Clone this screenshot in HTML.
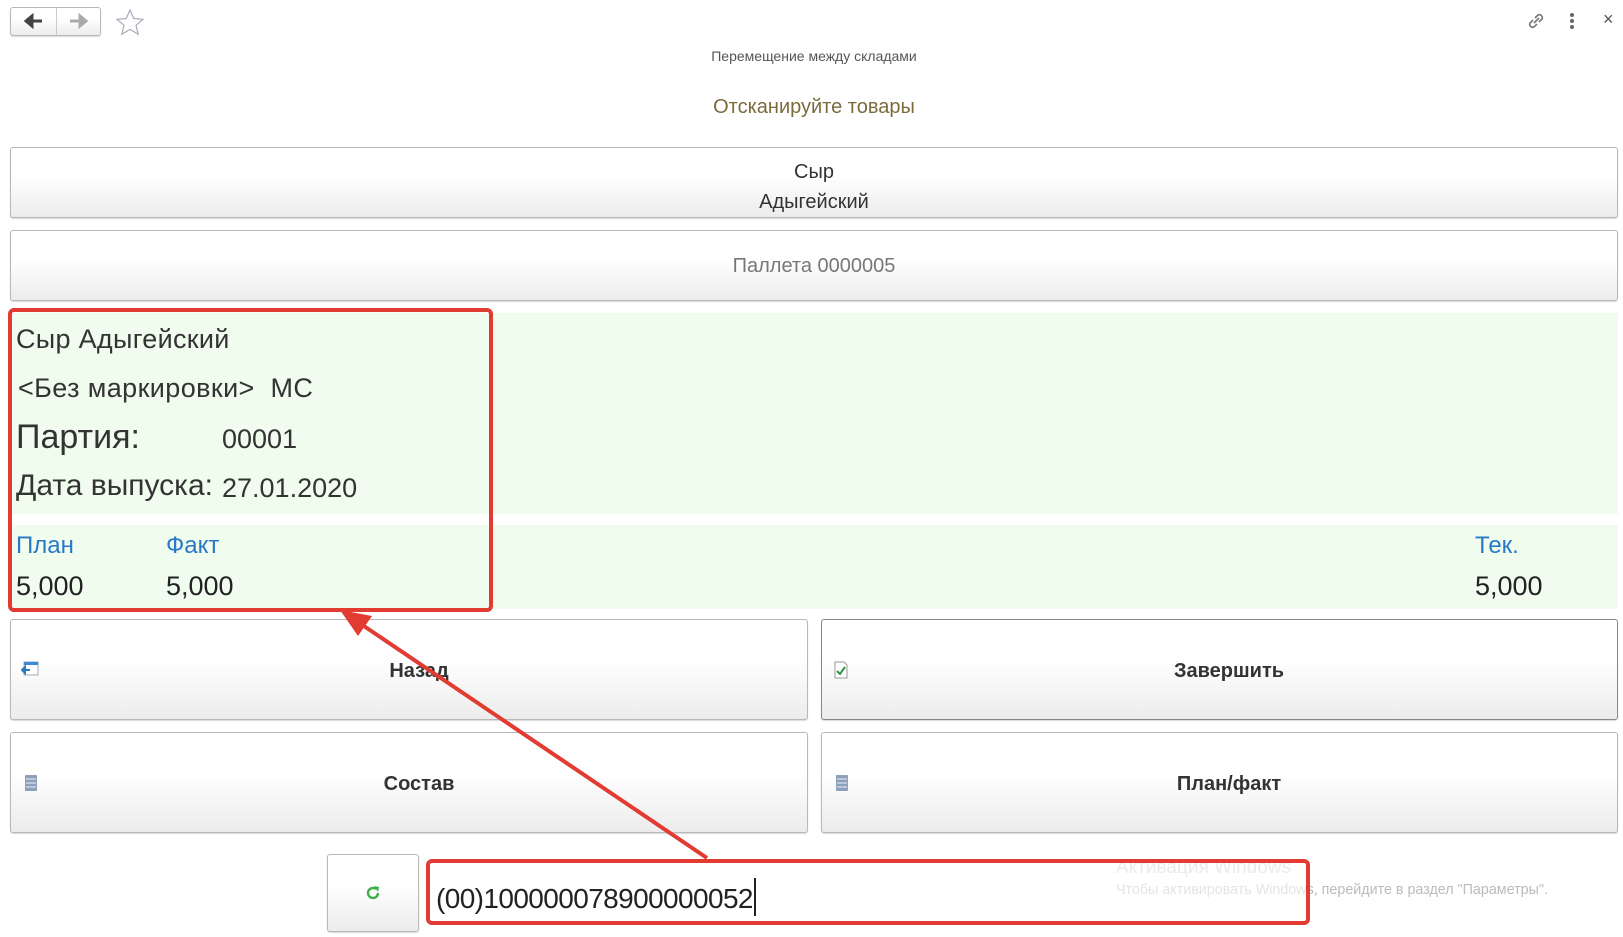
<!DOCTYPE html>
<html><head><meta charset="utf-8"><style>
*{margin:0;padding:0;box-sizing:border-box}
body{width:1623px;height:937px;background:#fff;position:relative;overflow:hidden;font-family:"Liberation Sans","DejaVu Sans",sans-serif;color:#333}
.a{position:absolute;white-space:nowrap}
.btn{position:absolute;border:1px solid #b8b8b8;border-radius:3px;background:linear-gradient(#fff 40%,#ececec);box-shadow:0 1px 1px rgba(0,0,0,.15)}
</style></head><body>
<div class="btn" style="left:10px;top:7px;width:91px;height:29px"></div>
<div class="a" style="left:56px;top:8px;width:1px;height:27px;background:#ccc"></div>
<svg class="a" style="left:24px;top:13px" width="20" height="16"><path d="M2 8h16M2 8l6-5v10z" stroke="#444" stroke-width="3" fill="#444"/></svg>
<svg class="a" style="left:68px;top:13px" width="20" height="16"><path d="M2 8h14M18 8l-6-5v10z" stroke="#aaa" stroke-width="3" fill="#aaa"/></svg>
<svg class="a" style="left:115px;top:8px" width="30" height="30"><path d="M15 2l3.8 8.5 9.2.8-7 6 2.2 9-8.2-4.9-8.2 4.9 2.2-9-7-6 9.2-.8z" fill="none" stroke="#aab" stroke-width="1.2"/></svg>
<svg class="a" style="left:1525px;top:10px" width="22" height="22"><path d="M9 13l5-5M8 10l-3 3a3 3 0 004 4l3-3M14 12l3-3a3 3 0 00-4-4l-3 3" stroke="#777" stroke-width="1.6" fill="none"/></svg>
<div class="a" style="left:1570px;top:13px;width:4px;height:4px;border-radius:2px;background:#666;box-shadow:0 6px 0 #666,0 12px 0 #666"></div>
<div class="a" style="left:1603px;top:9px;font-size:18px;color:#555">×</div>
<div class="a" style="left:0;width:1628px;top:48px;text-align:center;font-size:14px;color:#555">Перемещение между складами</div>
<div class="a" style="left:0;width:1628px;top:96px;text-align:center;font-size:20px;color:#7a6a3c">Отсканируйте товары</div>
<div class="btn" style="left:10px;top:147px;width:1608px;height:71px"></div>
<div class="a" style="left:0;width:1628px;top:157px;text-align:center;font-size:20px;line-height:30px;color:#333">Сыр<br>Адыгейский</div>
<div class="btn" style="left:10px;top:230px;width:1608px;height:71px"></div>
<div class="a" style="left:0;width:1628px;top:255px;text-align:center;font-size:20px;color:#777">Паллета 0000005</div>
<div class="a" style="left:10px;top:313px;width:1608px;height:201px;background:#effcee"></div>
<div class="a" style="left:10px;top:525px;width:1608px;height:84px;background:#effcee"></div>
<div class="a" style="left:16px;top:324px;font-size:27px;color:#333;letter-spacing:.3px">Сыр Адыгейский</div>
<div class="a" style="left:18px;top:373px;font-size:27px;color:#333;letter-spacing:.4px">&lt;Без маркировки&gt;&nbsp; МС</div>
<div class="a" style="left:16px;top:418px;font-size:34px;color:#333">Партия:</div>
<div class="a" style="left:222px;top:424px;font-size:27px;color:#333">00001</div>
<div class="a" style="left:16px;top:469px;font-size:30px;color:#333">Дата выпуска:</div>
<div class="a" style="left:222px;top:473px;font-size:27px;color:#333">27.01.2020</div>
<div class="a" style="left:16px;top:532px;font-size:24px;color:#2a78c8">План</div>
<div class="a" style="left:166px;top:532px;font-size:24px;color:#2a78c8">Факт</div>
<div class="a" style="left:1475px;top:532px;font-size:24px;color:#2a78c8">Тек.</div>
<div class="a" style="left:16px;top:571px;font-size:27px;color:#222">5,000</div>
<div class="a" style="left:166px;top:571px;font-size:27px;color:#222">5,000</div>
<div class="a" style="left:1475px;top:571px;font-size:27px;color:#222">5,000</div>
<div class="a" style="left:8px;top:308px;width:485px;height:304px;border:4px solid #e23c32;border-radius:6px"></div>
<div class="btn" style="left:10px;top:619px;width:798px;height:101px"></div>
<div class="btn" style="left:821px;top:619px;width:797px;height:101px;border-color:#888"></div>
<div class="btn" style="left:10px;top:732px;width:798px;height:101px"></div>
<div class="btn" style="left:821px;top:732px;width:797px;height:101px"></div>
<div class="a" style="left:0;width:838px;top:660px;text-align:center;font-size:20px;font-weight:bold;color:#333">Назад</div>
<div class="a" style="left:810px;width:838px;top:660px;text-align:center;font-size:20px;font-weight:bold;color:#333">Завершить</div>
<div class="a" style="left:0;width:838px;top:773px;text-align:center;font-size:20px;font-weight:bold;color:#333">Состав</div>
<div class="a" style="left:810px;width:838px;top:773px;text-align:center;font-size:20px;font-weight:bold;color:#333">План/факт</div>
<svg class="a" style="left:21px;top:661px" width="18" height="16"><rect x="3" y="1" width="14" height="13" fill="#fff" stroke="#9ab"/><rect x="3" y="1" width="14" height="3" fill="#3a8ad8"/><path d="M1 9h8M1 9l3-3v6z" stroke="#2a78c8" stroke-width="2" fill="#2a78c8"/></svg>
<svg class="a" style="left:833px;top:661px" width="16" height="18"><path d="M2 1h9l3 3v13H2z" fill="#fff" stroke="#999"/><path d="M4 10l3 3 5-7" stroke="#2a9a3a" stroke-width="2" fill="none"/></svg>
<svg class="a" style="left:24px;top:774px" width="14" height="18"><rect x="1" y="1" width="12" height="16" rx="1" fill="#8ca0bc"/><path d="M2 5h10M2 9h10M2 13h10" stroke="#dde" stroke-width="1.2"/></svg>
<svg class="a" style="left:835px;top:774px" width="14" height="18"><rect x="1" y="1" width="12" height="16" rx="1" fill="#8ca0bc"/><path d="M2 5h10M2 9h10M2 13h10" stroke="#dde" stroke-width="1.2"/></svg>
<div class="btn" style="left:327px;top:854px;width:92px;height:78px"></div>
<svg class="a" style="left:364px;top:884px" width="18" height="18"><path d="M14 9a5 5 0 11-2-4" stroke="#3ab04a" stroke-width="2.4" fill="none"/><path d="M10 2l5 1-1 5z" fill="#3ab04a"/></svg>
<div class="a" style="left:1116px;top:857px;font-size:19px;color:#ccc">Активация Windows</div>
<div class="a" style="left:1116px;top:882px;font-size:14.3px;color:#bbb">Чтобы активировать Windows, перейдите в раздел "Параметры".</div>
<div class="a" style="left:426px;top:859px;width:884px;height:66px;border:4px solid #e23c32;border-radius:6px;background:rgba(255,255,255,.6)"></div>
<div class="a" style="left:436px;top:878px;font-size:28px;color:#222;letter-spacing:-.6px">(00)100000078900000052<span style="display:inline-block;width:2px;height:38px;background:#222;vertical-align:-8px;margin-left:1px"></span></div>
<svg class="a" style="left:0;top:0" width="1623" height="937"><line x1="707" y1="858" x2="355" y2="620" stroke="#e23c32" stroke-width="4"/><path d="M340 610l32 6-14 20z" fill="#e23c32"/></svg>
</body></html>
